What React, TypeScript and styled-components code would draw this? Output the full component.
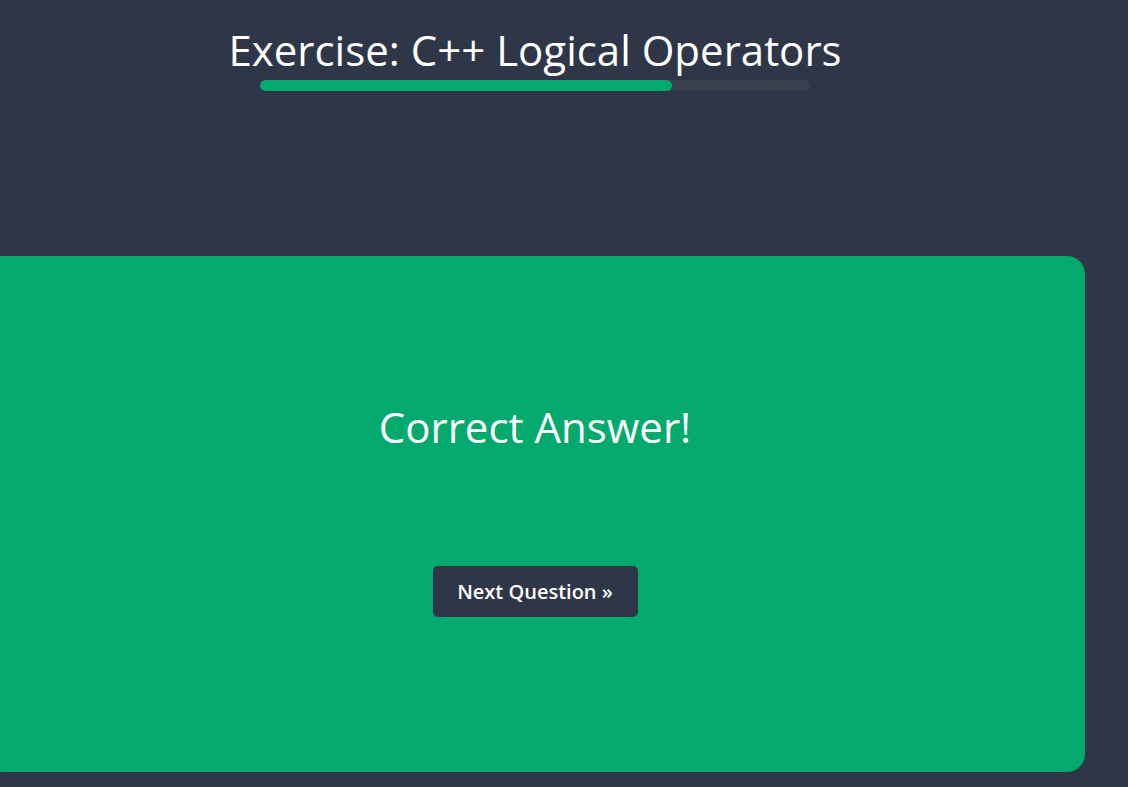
import React from "react";
import styled, { createGlobalStyle } from "styled-components";

const Global = createGlobalStyle`
  html, body { margin: 0; padding: 0; background: #2e3648; overflow: hidden; }
  body { font-family: "Open Sans", "Noto Sans", sans-serif; color: #fff; }
`;

const Page = styled.div`
  width: 1100px;
  margin-left: -15px;
  height: 787px;
  display: flex;
  flex-direction: column;
  align-items: center;
`;

const Header = styled.header`
  display: flex;
  flex-direction: column;
  align-items: center;
  padding-top: 22px;
  height: 256px;
  box-sizing: border-box;
`;

const Title = styled.h1`
  margin: 0;
  font-size: 42px;
  font-weight: 400;
  line-height: 56px;
  letter-spacing: 0;
  color: #fff;
`;

const Track = styled.div`
  width: 550px;
  height: 11px;
  border-radius: 6px;
  background: #38424f;
  overflow: hidden;
  margin-top: 2px;
`;

const Fill = styled.div`
  height: 100%;
  border-radius: 6px;
  background: #04aa6d;
`;

const Card = styled.section`
  width: 1100px;
  height: 516px;
  border-radius: 18px;
  background: #04aa6d;
  display: flex;
  flex-direction: column;
  align-items: center;
  padding-top: 143px;
  box-sizing: border-box;
`;

const Message = styled.h2`
  margin: 0;
  font-size: 42px;
  font-weight: 400;
  line-height: 56px;
  letter-spacing: 0;
  color: #fff;
`;

const NextButton = styled.button`
  margin-top: 111px;
  width: 205px;
  height: 51px;
  border: none;
  border-radius: 5px;
  background: #2e3648;
  color: #fff;
  font-family: "Open Sans", "Noto Sans", sans-serif;
  font-size: 20px;
  font-weight: 600;
  letter-spacing: 0;
  cursor: pointer;
`;

export default function App() {
  const progress = 75;
  return (
    <>
      <Global />
      <Page>
        <Header>
          <Title>Exercise: C++ Logical Operators</Title>
          <Track>
            <Fill style={{ width: `${progress}%` }} />
          </Track>
        </Header>
        <Card>
          <Message>Correct Answer!</Message>
          <NextButton>Next Question »</NextButton>
        </Card>
      </Page>
    </>
  );
}
